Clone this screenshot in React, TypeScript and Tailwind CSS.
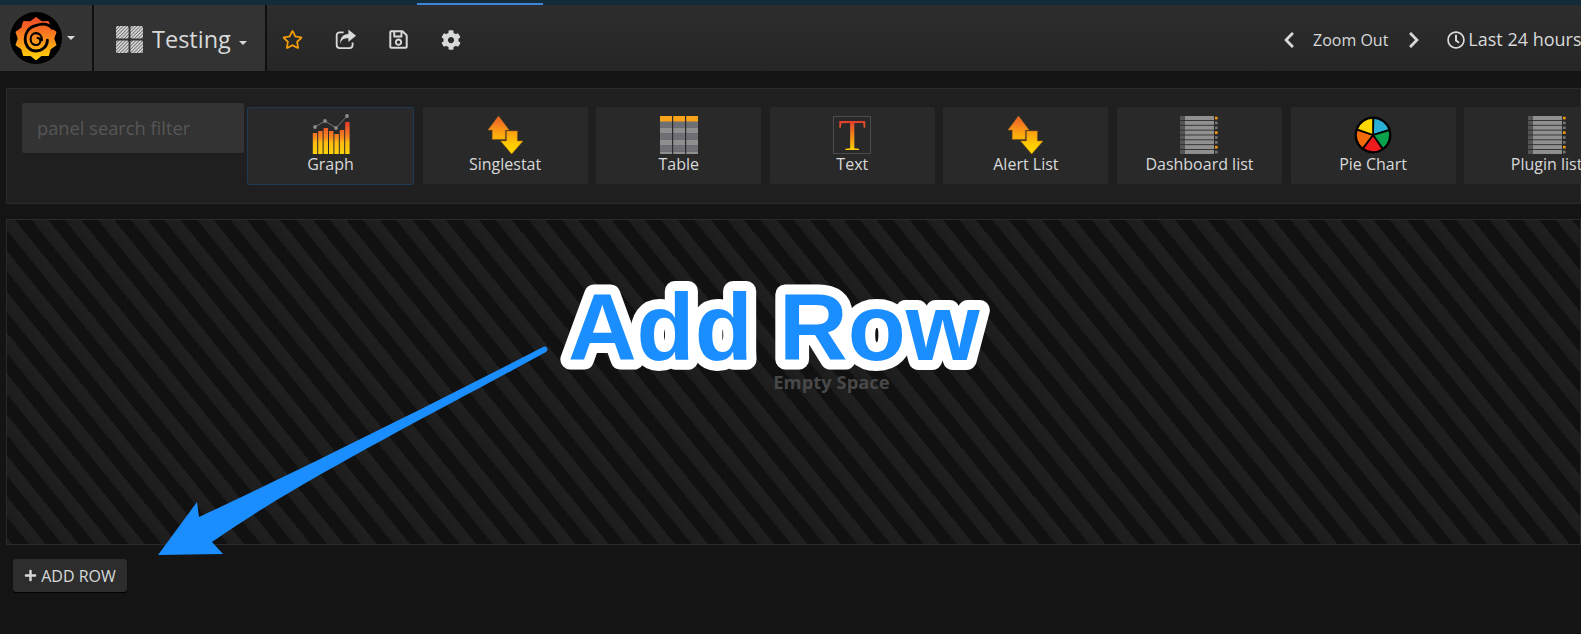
import type { ReactNode } from 'react';
import { FaChevronLeft, FaChevronRight, FaCog, FaPlus, FaRegClock, FaRegSave, FaRegStar } from 'react-icons/fa';

function Logo() {
  const points = Array.from({ length: 20 }, (_, i) => {
    const a = (i / 20) * Math.PI * 2 - Math.PI / 2;
    const r = i % 2 ? 15.5 : 18.5;
    return `${24 + Math.cos(a) * r},${24.5 + Math.sin(a) * r}`;
  }).join(' ');
  return (
    <svg viewBox="0 0 48 48" className="h-[52px] w-[52px]">
      <defs>
        <linearGradient id="logoFire" gradientUnits="userSpaceOnUse" x1="0" y1="6" x2="0" y2="43">
          <stop offset="0" stopColor="#ef4a27" />
          <stop offset="0.5" stopColor="#f98a1c" />
          <stop offset="1" stopColor="#fdd20a" />
        </linearGradient>
      </defs>
      <circle cx="24" cy="24" r="24" fill="#000" />
      <polygon points={points} fill="url(#logoFire)" stroke="url(#logoFire)" strokeWidth="2.5" strokeLinejoin="round" />
      <path
        d="M39 15C35 10 28 11 23.5 12.5C17.5 14 14 19 14 25C14 31.5 18.5 36 24 36C30 36 34.5 31.5 34.5 26"
        fill="none"
        stroke="#000"
        strokeWidth="2.6"
        strokeLinecap="round"
      />
      <path
        d="M29.5 26C29.5 22 27 19.5 24 19.5C21 19.5 19 22 19 25C19 28.5 21.5 30.5 24 30.5C26.5 30.5 28 28.5 28 26.5C28 25 27 24 25.5 24"
        fill="none"
        stroke="#000"
        strokeWidth="1.9"
        strokeLinecap="round"
      />
    </svg>
  );
}

function GridIcon() {
  return (
    <svg viewBox="0 0 27 27" className="h-[27px] w-[27px]">
      <defs>
        <pattern id="hatch" width="2.4" height="2.4" patternUnits="userSpaceOnUse" patternTransform="rotate(-45)">
          <rect width="2.4" height="2.4" fill="#d4d4d4" />
          <rect width="2.4" height="0.8" fill="#6a6a6a" />
        </pattern>
      </defs>
      <rect x="0" y="0" width="12.6" height="12.6" rx="1.5" fill="url(#hatch)" />
      <rect x="14.4" y="0" width="12.6" height="12.6" rx="1.5" fill="url(#hatch)" />
      <rect x="0" y="14.4" width="12.6" height="12.6" rx="1.5" fill="url(#hatch)" />
      <rect x="14.4" y="14.4" width="12.6" height="12.6" rx="1.5" fill="url(#hatch)" />
    </svg>
  );
}

function ShareIcon() {
  return (
    <svg viewBox="0 0 24 24" className="h-[23px] w-[23px]">
      <path
        d="M10 4.5H6a3.2 3.2 0 0 0-3.2 3.2v10.1A3.2 3.2 0 0 0 6 21h10.2a3.2 3.2 0 0 0 3.2-3.2v-2.6"
        fill="none"
        stroke="#d8d9da"
        strokeWidth="1.9"
      />
      <path d="M15 1.5l8 6.5-8 6.5v-3.8c-4.2 0-7.6 1-8.6 6.3-.4-6.5 3-10.7 8.6-10.7z" fill="#d8d9da" />
    </svg>
  );
}

function Caret() {
  return <span className="inline-block h-0 w-0 border-x-[4px] border-t-[4px] border-x-transparent border-t-[#d8d9da]" />;
}

function GraphIcon() {
  const bars = [
    [19, 21],
    [17, 23],
    [14, 26],
    [17, 23],
    [20, 20],
    [16, 24],
    [8, 32],
  ];
  return (
    <svg viewBox="0 0 38 40" className="h-[40px] w-[38px]">
      <defs>
        <linearGradient id="barFire" gradientUnits="userSpaceOnUse" x1="0" y1="8" x2="0" y2="40">
          <stop offset="0" stopColor="#e8392b" />
          <stop offset="0.5" stopColor="#f58c1f" />
          <stop offset="0.62" stopColor="#fcb811" />
          <stop offset="1" stopColor="#fdd20a" />
        </linearGradient>
      </defs>
      {bars.map(([y, h], i) => (
        <rect key={i} x={0.8 + i * 5.4} y={y} width="4.4" height={h} fill="url(#barFire)" />
      ))}
      <polyline points="3,13 13,7 24,14 35,2" fill="none" stroke="#777" strokeWidth="1" />
      {[[3, 13], [13, 7], [24, 14], [35, 2]].map(([x, y]) => (
        <circle key={x} cx={x} cy={y} r="1.9" fill="#8a8a8a" />
      ))}
    </svg>
  );
}

function ArrowsIcon({ id }: { id: string }) {
  return (
    <svg viewBox="0 0 35 38" className="h-[38px] w-[35px]">
      <defs>
        <linearGradient id={id} gradientUnits="userSpaceOnUse" x1="0" y1="0" x2="0" y2="38">
          <stop offset="0" stopColor="#ee5a2f" />
          <stop offset="0.45" stopColor="#fca311" />
          <stop offset="0.75" stopColor="#ffcc00" />
          <stop offset="1" stopColor="#ffd800" />
        </linearGradient>
      </defs>
      <path d="M10.5 0 21 14H17.3V23.3H4.3V14H0Z" fill={`url(#${id})`} stroke="#b8720f" strokeWidth="0.5" />
      <path d="M18.6 15H29.3V25H35L23.7 38 12.6 25H18.6Z" fill={`url(#${id})`} stroke="#b8720f" strokeWidth="0.5" />
    </svg>
  );
}

function TableIcon() {
  const rows = [6, 12, 18, 24, 30, 36];
  return (
    <svg viewBox="0 0 38 38" className="h-[38px] w-[38px]">
      <rect width="38" height="38" fill="#6c6c72" />
      <rect width="38" height="5.5" fill="#f9a31a" />
      {rows.map((y, i) => (
        <rect key={y} y={y} width="38" height="5" fill={i % 2 ? '#8f8f8f' : '#6f7076'} />
      ))}
      <rect x="12" width="1.2" height="38" fill="#2a2a2a" />
      <rect x="25" width="1.2" height="38" fill="#2a2a2a" />
    </svg>
  );
}

function TextIcon() {
  return (
    <div className="flex h-[38px] w-[38px] items-center justify-center border border-[#4a4a4a] bg-[#292929]">
      <span className="bg-[linear-gradient(#e23d2a_12%,#fdd20a_92%)] bg-clip-text font-['Liberation_Serif',serif] text-[45px] leading-[36px] text-transparent">
        T
      </span>
    </div>
  );
}

function ListIcon() {
  const rows = [0, 1, 2, 3, 4, 5, 6, 7];
  return (
    <svg viewBox="0 0 38 38" className="h-[38px] w-[38px]">
      {rows.map(i => (
        <g key={i}>
          <rect x="0" y={i * 4.85} width="5" height="4" fill="#555" />
          <rect x="5" y={i * 4.85} width="29" height="4" fill="#909090" />
          <rect x="35" y={i * 4.85 + 0.8} width="2.6" height="2.6" fill={i % 3 === 0 ? '#f59a0b' : '#777'} />
        </g>
      ))}
    </svg>
  );
}

function PieIcon() {
  // five wedges with dark gaps
  const colors = ['#2ab0d6', '#0aa24b', '#ee1c1c', '#f26a0a', '#ffd800'];
  const r = 17;
  const wedges = colors.map((c, i) => {
    const a1 = ((i * 72 + 2 - 90) * Math.PI) / 180;
    const a2 = ((i * 72 + 72 - 90) * Math.PI) / 180;
    const p = (a: number) => `${19 + Math.cos(a) * r} ${19 + Math.sin(a) * r}`;
    return <path key={c} d={`M19 19L${p(a1)}A${r} ${r} 0 0 1 ${p(a2)}Z`} fill={c} stroke="#000" strokeWidth="1.6" />;
  });
  return (
    <svg viewBox="0 0 38 38" className="h-[38px] w-[38px]">
      <circle cx="19" cy="19" r="18.5" fill="#000" />
      {wedges}
    </svg>
  );
}

function PanelCard({ label, icon, active }: { label: string; icon: ReactNode; active?: boolean }) {
  return (
    <div
      className={`flex shrink-0 flex-col items-center rounded-[2px] border bg-[#292929] pt-[6px] ${
        active ? 'h-[78px] w-[167px] border-[#1f3a52]' : 'h-[77px] w-[165px] border-transparent'
      }`}
    >
      <div className="flex h-[40px] items-end">{icon}</div>
      <span className="whitespace-nowrap text-[16px] leading-[20px] text-[#d8d9da]">{label}</span>
    </div>
  );
}

// the hand drawn arrow and big label on top of the screenshot
function Annotation() {
  return (
    <svg viewBox="0 0 1581 634" className="pointer-events-none absolute inset-0 h-[634px] w-[1581px]">
      <path
        d="M158 555 197 502 199 517C300 470 450 395 543 347 547 345 549 350 546 352 450 405 300 480 212 542L223 554Z"
        fill="#1b8eff"
      />
      <text
        x="568"
        y="360"
        fontFamily="'Liberation Sans', sans-serif"
        fontWeight="700"
        fontSize="95"
        fill="#1b8eff"
        stroke="#fff"
        strokeWidth="20"
        strokeLinejoin="round"
        paintOrder="stroke"
      >
        Add Row
      </text>
    </svg>
  );
}

export default function App() {
  return (
    <div className="relative h-[634px] w-[1581px] overflow-hidden bg-[#141414] font-['Open_Sans',sans-serif]">
      <div className="relative h-[5px] bg-[#142b3b]">
        <div className="absolute left-[417px] top-[3px] h-[2px] w-[126px] bg-[#3d85d8]" />
      </div>

      <header className="flex h-[66px] items-stretch bg-gradient-to-b from-[#2d2d2d] to-[#262626] text-[#d8d9da]">
        <div className="flex w-[94px] items-center gap-[5px] border-r-2 border-[#0f0f0f] bg-[#333] pl-[10px]">
          <Logo />
          <Caret />
        </div>
        <div className="flex w-[173px] items-center border-r-2 border-[#0f0f0f] bg-[#333] pl-[22px] pt-[3px]">
          <GridIcon />
          <span className="ml-[9px] text-[23.5px] leading-none">Testing</span>
          <span className="ml-[8px] mt-[6px] flex">
            <Caret />
          </span>
        </div>
        <div className="ml-[-1px] flex items-center pt-[3px] text-[20px]">
          <span className="flex w-[53px] justify-center">
            <FaRegStar className="text-[21px] text-[#f59e0b]" />
          </span>
          <span className="flex w-[53px] justify-center">
            <ShareIcon />
          </span>
          <span className="flex w-[53px] justify-center">
            <FaRegSave className="text-[21px]" />
          </span>
          <span className="flex w-[51px] justify-center">
            <FaCog />
          </span>
        </div>
        <div className="ml-auto flex w-[301px] shrink-0 items-center whitespace-nowrap pt-[3px]">
          <FaChevronLeft className="shrink-0 text-[18px]" />
          <span className="ml-[15px] text-[16px]">Zoom Out</span>
          <FaChevronRight className="ml-[17px] shrink-0 text-[18px]" />
          <FaRegClock className="ml-[24px] shrink-0 text-[18px]" />
          <span className="ml-[3px] text-[18px]">Last 24 hours</span>
        </div>
      </header>

      <section className="ml-[6px] mt-[17px] flex h-[116px] items-start gap-[3px] border border-[#2a2a2a] bg-[#1f1f1f] pl-[15px] pt-[14px]">
        <div className="flex h-[50px] w-[222px] shrink-0 items-center rounded-[2px] bg-[#333] pl-[15px] text-[18.3px] text-[#565656]">
          panel search filter
        </div>
        <div className="mt-[4px] flex gap-[8.6px]">
          <PanelCard label="Graph" icon={<GraphIcon />} active />
          <PanelCard label="Singlestat" icon={<ArrowsIcon id="statFire" />} />
          <PanelCard label="Table" icon={<TableIcon />} />
          <PanelCard label="Text" icon={<TextIcon />} />
          <PanelCard label="Alert List" icon={<ArrowsIcon id="alertFire" />} />
          <PanelCard label="Dashboard list" icon={<ListIcon />} />
          <PanelCard label="Pie Chart" icon={<PieIcon />} />
          <PanelCard label="Plugin list" icon={<ListIcon />} />
        </div>
      </section>

      <section className="ml-[6px] mt-[15px] flex h-[326px] items-center justify-center border border-[#2a2a2a] bg-[repeating-linear-gradient(51deg,#1f1f1f_0px,#1f1f1f_4.1px,#111111_4.1px,#111111_17px,#1c1c1c_17px,#1f1f1f_25.75px)]">
        <span className="ml-[76px] text-[18.4px] font-bold text-[#484848]">Empty Space</span>
      </section>

      <button className="ml-[13px] mt-[14px] flex h-[33px] w-[114px] items-center justify-center gap-[4px] rounded-[3px] bg-[#2d2d2d] text-[16px] text-[#d8d9da] shadow-[0_1px_1px_#000]">
        <FaPlus className="text-[13px]" />
        ADD ROW
      </button>

      <Annotation />
    </div>
  );
}
